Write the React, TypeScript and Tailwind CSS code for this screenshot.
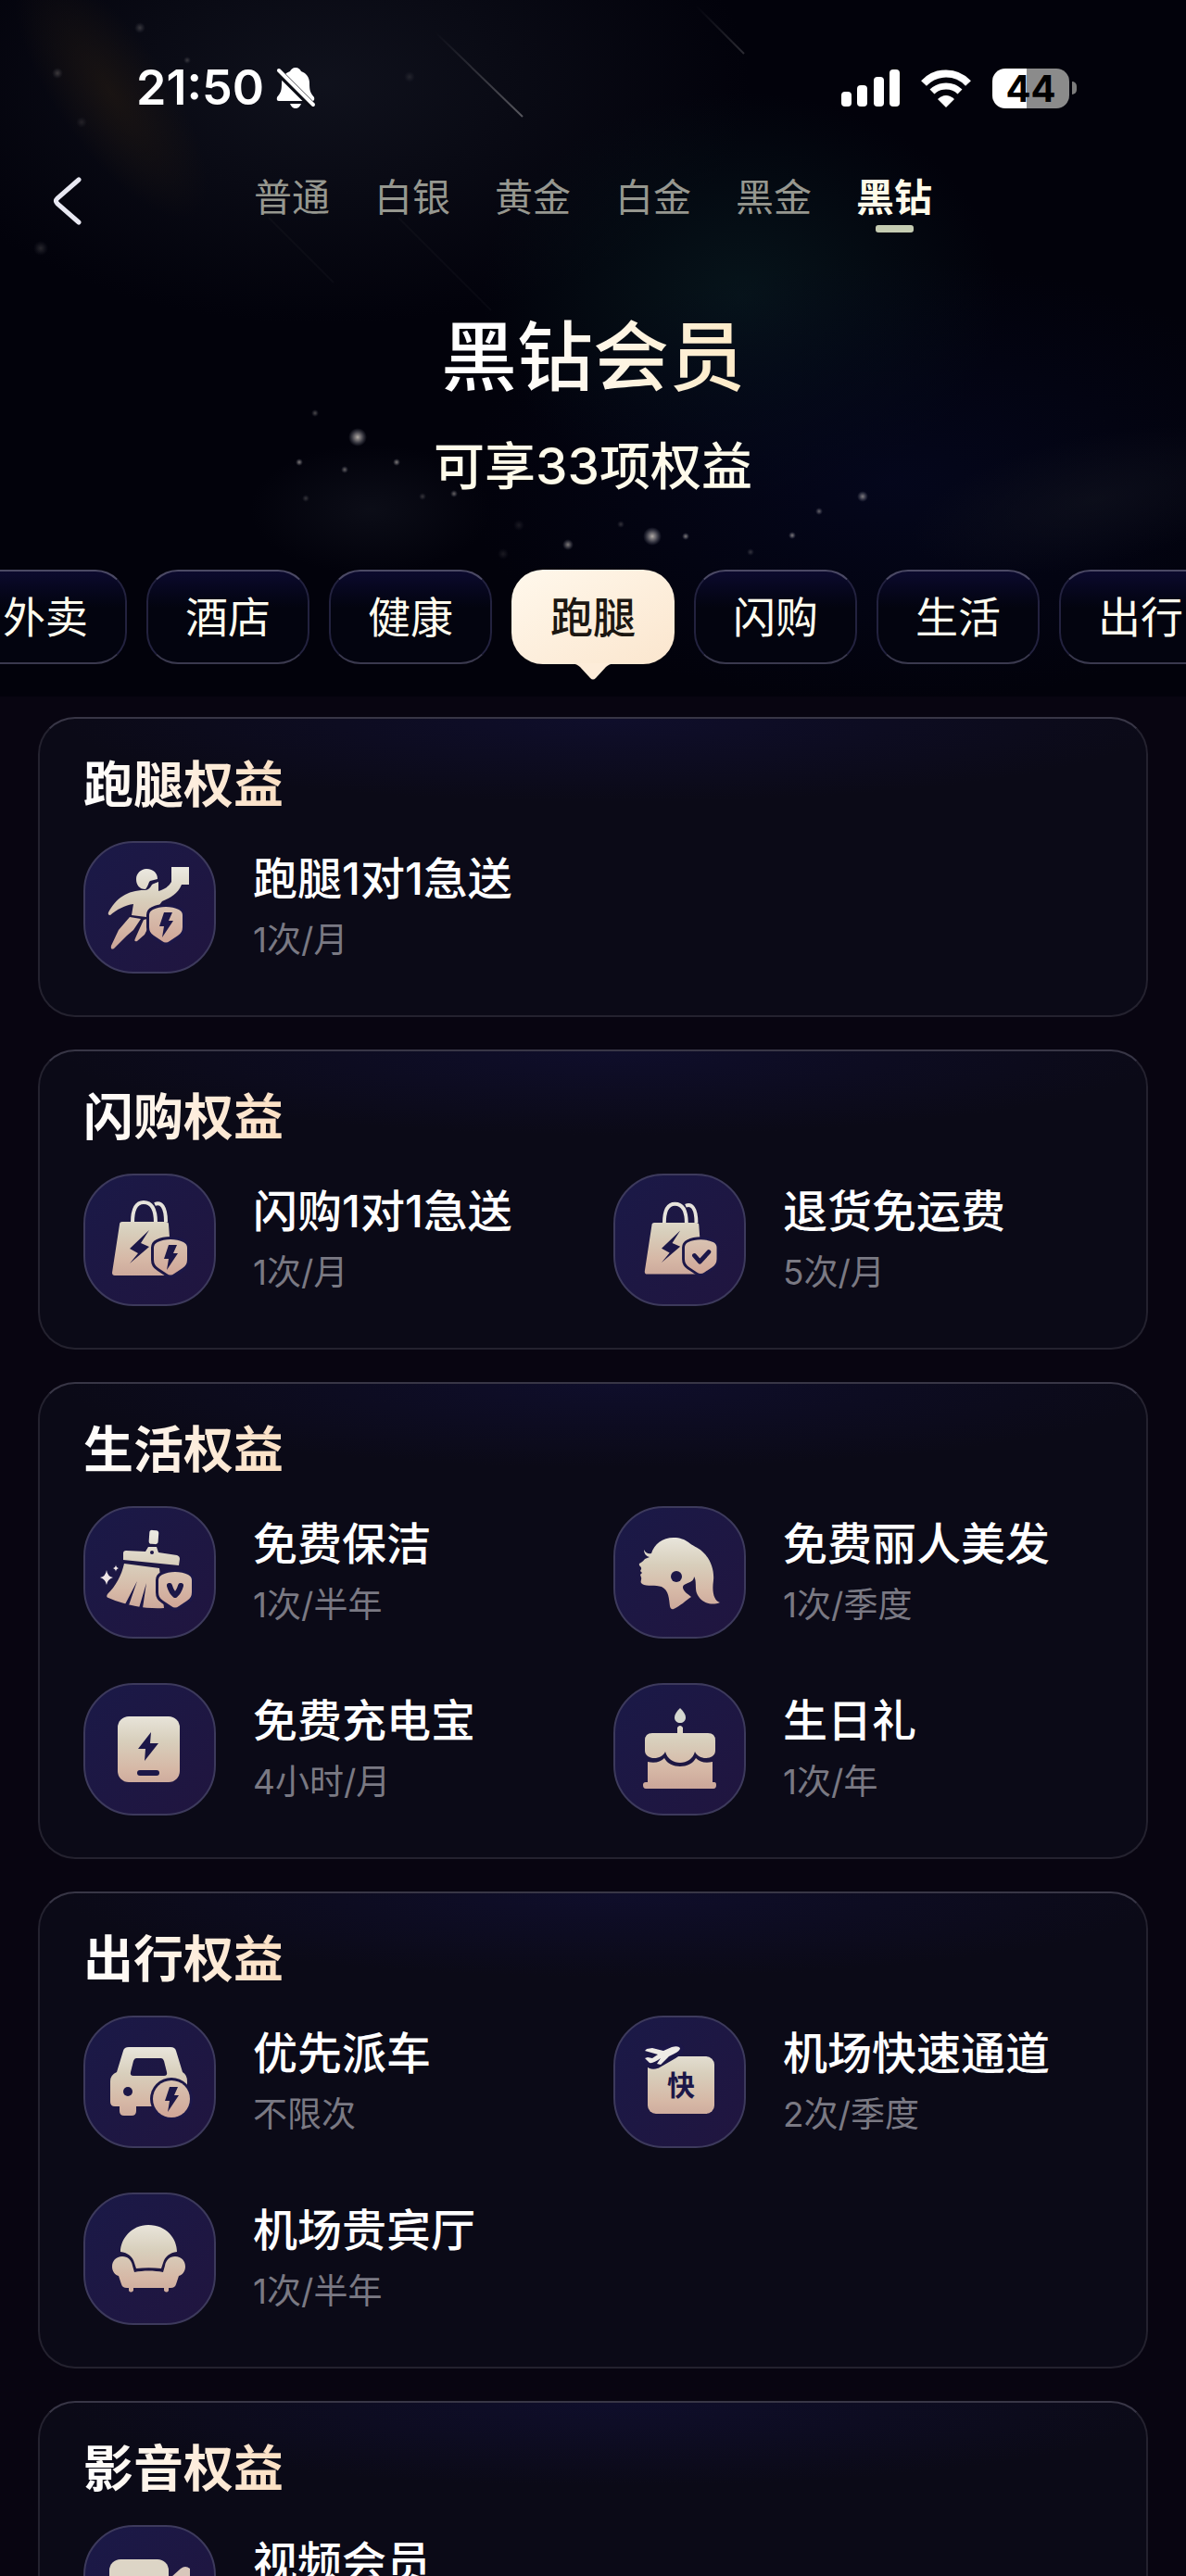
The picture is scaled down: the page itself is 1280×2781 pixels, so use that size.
import type { JSX, ReactNode } from "react";

const levels = ["普通", "白银", "黄金", "白金", "黑金", "黑钻"];
const categories = ["外卖", "酒店", "健康", "跑腿", "闪购", "生活", "出行"];

const INK = "#1c1748";
const CREAM = "url(#cream)";

// x, y, radius, opacity
const stars = [
  [386, 472, 5, 0.7], [704, 579, 5, 0.7], [323, 499, 2, 0.5], [428, 499, 2, 0.5],
  [340, 446, 2, 0.3], [372, 507, 2, 0.4], [490, 533, 2, 0.4], [456, 536, 2, 0.2],
  [330, 538, 2, 0.2], [931, 536, 3, 0.5], [884, 552, 2, 0.4], [740, 579, 2, 0.5],
  [855, 578, 2, 0.5], [613, 588, 3, 0.5], [810, 596, 2, 0.2], [560, 567, 3, 0.1],
  [670, 566, 2, 0.2], [543, 598, 3, 0.1], [151, 30, 3, 0.2], [62, 79, 3, 0.2],
  [202, 65, 2, 0.2], [44, 268, 4, 0.15], [442, 83, 3, 0.1], [88, 132, 3, 0.1],
];

function NightSky(): JSX.Element {
  return (
    <svg className="absolute inset-0 h-full w-full" viewBox="0 0 1280 752" preserveAspectRatio="xMidYMin slice" aria-hidden="true">
      <defs>
        <radialGradient id="teal">
          <stop offset="0" stopColor="#07161c" stopOpacity="0.9" />
          <stop offset="1" stopColor="#07161c" stopOpacity="0" />
        </radialGradient>
        <radialGradient id="steel">
          <stop offset="0" stopColor="#11131e" stopOpacity="0.9" />
          <stop offset="1" stopColor="#11131e" stopOpacity="0" />
        </radialGradient>
        <radialGradient id="amber">
          <stop offset="0" stopColor="#1d1612" stopOpacity="0.8" />
          <stop offset="1" stopColor="#1d1612" stopOpacity="0" />
        </radialGradient>
        <radialGradient id="navy">
          <stop offset="0" stopColor="#050820" stopOpacity="0.8" />
          <stop offset="1" stopColor="#050820" stopOpacity="0" />
        </radialGradient>
        <radialGradient id="star">
          <stop offset="0" stopColor="#fff6e8" />
          <stop offset="0.4" stopColor="#c9c4c4" stopOpacity="0.7" />
          <stop offset="1" stopColor="#8a8fa5" stopOpacity="0" />
        </radialGradient>
        <linearGradient id="meteor" x1="0" y1="0" x2="1" y2="1">
          <stop offset="0" stopColor="#8b8a8f" stopOpacity="0" />
          <stop offset="1" stopColor="#8b8a8f" stopOpacity="0.6" />
        </linearGradient>
      </defs>
      <ellipse cx="350" cy="90" rx="460" ry="260" fill="url(#steel)" />
      <ellipse cx="120" cy="100" rx="60" ry="160" fill="url(#amber)" transform="rotate(-35 120 100)" />
      <ellipse cx="800" cy="320" rx="280" ry="220" fill="url(#teal)" />
      <ellipse cx="960" cy="520" rx="460" ry="240" fill="url(#navy)" />
      <ellipse cx="1180" cy="540" rx="200" ry="70" fill="url(#steel)" opacity="0.7" transform="rotate(-12 1180 540)" />
      <ellipse cx="400" cy="550" rx="130" ry="70" fill="url(#steel)" opacity="0.7" />
      <path d="M470 35 L564 126" stroke="url(#meteor)" strokeWidth="2" />
      <path d="M750 5 L803 58" stroke="url(#meteor)" strokeWidth="2" opacity="0.5" />
      <path d="M290 235 L360 305 M430 235 L530 335" stroke="#5b5a60" strokeWidth="2" opacity="0.07" />
      {stars.map(([x, y, r, o]) => (
        <circle key={`${x}-${y}`} cx={x} cy={y} r={r * 2} opacity={o} fill="url(#star)" />
      ))}
    </svg>
  );
}

function Shield({ x, y, children }: { x: number; y: number; children: ReactNode }): JSX.Element {
  const d = "M0 -19 C5 -19 10 -18 14 -16 Q18 -14 18 -10 V3 Q18 9 13 12 L4 18 Q0 21 -4 18 L-13 12 Q-18 9 -18 3 V-10 Q-18 -14 -14 -16 C-10 -18 -5 -19 0 -19 Z";
  return (
    <g transform={`translate(${x} ${y})`}>
      <path d={d} fill={INK} stroke={INK} strokeWidth="6" />
      <path d={d} fill="url(#rose)" />
      {children}
    </g>
  );
}

const smallBolt = <path d="M-2 -13 H7 L3 -4 H8 L-4 14 L-2 2 H-7 Z" fill={INK} />;

function Bag({ badge }: { badge: ReactNode }): JSX.Element {
  return (
    <>
      <path d="M77 33 C84 30 89 36 89 52 M53 53 C53 38 57 31 65 31 C73 31 78 38 78 53" fill="none" stroke="#e6e3db" strokeWidth="4" />
      <path d="M42 52 H89 Q92 52 92 55 L96 110 H34 Q31 110 31 107 L39 55 Q39 52 42 52 Z" fill={CREAM} />
      <path d="M71 61 L50 81 L59 86 L50 97 L71 79 L62 75 Z" fill={INK} />
      <Shield x={94} y={90}>{badge}</Shield>
    </>
  );
}

const icons: Record<string, ReactNode> = {
  runner: (
    <>
      <path d="M95 28 H114 V47 H106 C102 57 94 61 85 65 L79 73 H74 Q69 76 68 82 L52 80 L54 68 C45 69 36 74 29 80 Q26 80 27 77 C35 62 47 53 66 53 C73 53 72 47 76 46 L81 44 V54 C88 52 92 49 95 44 Z" fill={CREAM} />
      <path d="M68 30 C76 30 80 35 80 41 L72 43 C70 45 70 49 67 52 C60 52 57 47 57 41 C57 35 62 30 68 30 Z" fill={CREAM} />
      <path d="M50 82 L62 84 L54 96 L47 102 L33 116 Q29 118 30 113 L38 96 Z" fill={CREAM} />
      <path d="M65 85 L69 84 V95 L66 101 L58 108 Q54 109 56 105 L60 96 Z" fill={CREAM} />
      <Shield x={89} y={90}>{smallBolt}</Shield>
    </>
  ),
  bagBolt: <Bag badge={smallBolt} />,
  bagCheck: (
    <g transform="translate(4 3) scale(0.96)">
      <Bag badge={<path d="M-7 -1 L-1 6 L9 -5" fill="none" stroke={INK} strokeWidth="5" strokeLinecap="round" strokeLinejoin="round" />} />
    </g>
  ),
  broom: (
    <>
      <rect x="71" y="26" width="10" height="15" rx="3" fill={CREAM} transform="rotate(4 76 33)" />
      <path d="M70 44 H79 L81 50 L101 53 Q104 54 104 57 L103 64 L43 58 V51 Q43 48 46 48 L67 49 Z" fill={CREAM} />
      <circle cx="74" cy="50" r="2" fill={INK} />
      <path d="M44 62 L82 67 L87 110 C72 111 50 109 27 99 Q24 98 26 95 C35 86 41 75 44 62 Z" fill={CREAM} />
      <path d="M58 81 L45 106 L49 107 Z M68 83 L60 110 L64 110 Z" fill={INK} />
      <Shield x={99} y={90}>
        <path d="M-6 -4 Q-4 3 0 6 Q4 3 6 -4" fill="none" stroke={INK} strokeWidth="6" strokeLinecap="round" strokeLinejoin="round" />
      </Shield>
      <path d="M25 69 Q26 76 32 77 Q26 79 25 85 Q24 79 18 77 Q24 76 25 69 Z M35 63 Q35 66 38 67 Q35 68 35 71 Q35 68 32 67 Q35 66 35 63 Z" fill="#efe6e6" />
    </>
  ),
  hair: (
    <>
      <path d="M65 34 C72 34 77 36 81 39 C85 43 91 44 96 49 C105 57 109 69 108 80 C106 94 109 102 115 104 C105 108 94 104 90 94 C88 89 90 80 87 76 C87 84 75 82 75 88 C76 93 80 94 84 98 C78 102 72 108 65 111 Q62 112 61 108 C60 100 60 91 52 87 C46 85 36 87 31 84 C28 82 31 79 30 77 L29 74 L31 72 L29 70 L30 68 C31 65 27 65 28 62 C32 60 33 58 34 57 L39 55 C35 54 33 51 33 47 C35 51 38 52 41 51 C44 41 53 34 65 34 Z" fill={CREAM} />
      <circle cx="68" cy="76" r="6" fill={INK} />
    </>
  ),
  powerBank: (
    <>
      <rect x="37" y="36" width="67" height="71" rx="12" fill={CREAM} />
      <path d="M73 53 L59 71 H67 L66 84 L81 65 H72 Z" fill={INK} />
      <rect x="58" y="94" width="24" height="6" rx="3" fill={INK} />
    </>
  ),
  cake: (
    <>
      <path d="M72 27 C76 31 78 34 78 37 C78 41 75 43 72 43 C69 43 66 41 66 37 C66 34 68 31 72 27 Z" fill="#d5d8d0" />
      <path d="M69 54 V48 Q72 44 75 48 V54 H102 Q110 54 110 62 V73 C110 83 92 84 88 74 C84 90 60 90 56 74 C52 84 34 83 34 73 V62 Q34 54 42 54 Z" fill={CREAM} />
      <path d="M37 85 C45 87 51 85 55 81 C61 93 83 93 89 81 C93 85 99 87 107 85 V107 H109 Q111 107 111 110 Q111 114 108 114 H35 Q32 114 32 110 Q32 107 35 107 H37 Z" fill={CREAM} />
    </>
  ),
  car: (
    <>
      <path fillRule="evenodd" d="M49 34 H94 Q99 34 100 38 L107 61 Q112 64 112 71 V98 H57 V103 Q57 108 52 108 H44 Q39 108 39 103 V98 H34 Q29 98 29 93 V71 Q29 64 36 61 L43 38 Q44 34 49 34 Z M57 46 Q55 46 54 49 L51 61 Q50 65 54 65 H87 Q91 65 90 61 L87 49 Q86 46 84 46 Z" fill={CREAM} />
      <circle cx="48" cy="82" r="5" fill={INK} />
      <circle cx="95" cy="90" r="23" fill={INK} />
      <circle cx="95" cy="90" r="20" fill="url(#rose)" />
      <g transform="translate(95 90)">{smallBolt}</g>
    </>
  ),
  fastPass: (
    <>
      <rect x="37" y="44" width="72" height="62" rx="9" fill={CREAM} />
      <path d="M36 36 L42 36 L51 38 L61 34 Q70 31 72 36 Q72 39 66 42 L47 53 Q41 55 38 51 L34 46 L37 45 L42 47 L49 44 Z" fill={INK} stroke={INK} strokeWidth="8" strokeLinejoin="round" />
      <path d="M36 36 L42 35 L54 38 L63 34 Q70 32 72 35 Q72 38 66 41 L60 44 L51 53 L47 52 L51 46 Q43 52 39 51 L34 46 L37 45 L42 46 L48 42 L34 38 Z" fill="#eeebe6" />
      <text x="73" y="86" textAnchor="middle" fontSize="30" fontWeight="700" fill={INK}>快</text>
    </>
  ),
  sofa: (
    <>
      <path d="M70 35 C90 35 101 50 101 64 C93 65 88 69 86 76 L84 82 C75 81 66 81 57 82 L55 76 C53 69 48 65 40 64 C40 50 52 35 70 35 Z" fill={CREAM} />
      <path d="M42 69 C48 69 52 73 53 79 L55 86 C65 84 76 84 86 86 L88 79 C89 73 93 69 99 69 C106 69 110 74 110 80 C110 85 107 89 103 90 L100 99 Q99 103 94 103 H92 V106 Q90 109 87 106 V103 H54 V106 Q51 109 49 106 V103 H47 Q42 103 41 99 L38 90 C34 89 31 85 31 80 C31 74 35 69 42 69 Z" fill={CREAM} />
    </>
  ),
  video: (
    <>
      <rect x="28" y="37" width="64" height="66" rx="12" fill="#ddd5c6" />
      <path d="M95 56 L105 47 Q110 43 115 47 V92 L95 80 Z" fill="#d8c7bb" />
    </>
  ),
};

interface Benefit {
  icon: string;
  name: string;
  quota: string;
}

const sections: { title: string; items: Benefit[] }[] = [
  { title: "跑腿权益", items: [{ icon: "runner", name: "跑腿1对1急送", quota: "1次/月" }] },
  {
    title: "闪购权益",
    items: [
      { icon: "bagBolt", name: "闪购1对1急送", quota: "1次/月" },
      { icon: "bagCheck", name: "退货免运费", quota: "5次/月" },
    ],
  },
  {
    title: "生活权益",
    items: [
      { icon: "broom", name: "免费保洁", quota: "1次/半年" },
      { icon: "hair", name: "免费丽人美发", quota: "1次/季度" },
      { icon: "powerBank", name: "免费充电宝", quota: "4小时/月" },
      { icon: "cake", name: "生日礼", quota: "1次/年" },
    ],
  },
  {
    title: "出行权益",
    items: [
      { icon: "car", name: "优先派车", quota: "不限次" },
      { icon: "fastPass", name: "机场快速通道", quota: "2次/季度" },
      { icon: "sofa", name: "机场贵宾厅", quota: "1次/半年" },
    ],
  },
  { title: "影音权益", items: [{ icon: "video", name: "视频会员", quota: "1次/月" }] },
];

function StatusBar(): JSX.Element {
  return (
    <div className="flex h-[130px] items-center justify-between pt-[60px] pr-[118px] pl-[147px]">
      <div className="flex items-center gap-3">
        <span className="text-[52px] leading-[70px] font-semibold">21:50</span>
        <svg width="44" height="46" viewBox="0 0 44 46" aria-hidden="true">
          <path d="M22 1 C25 1 27 3 28 5 C34 7 37 12 37 18 C37 26 38 28 42 33 Q43 37 40 37 H4 Q1 37 2 33 C6 28 7 26 7 18 C7 12 10 7 16 5 C17 3 19 1 22 1 Z M16 40 H28 Q26 45 22 45 Q18 45 16 40 Z" fill="#fff" />
          <path d="M3 5 L41 43" stroke="#0b0c14" strokeWidth="8" />
          <path d="M4 4 L41 41" stroke="#fff" strokeWidth="4" strokeLinecap="round" />
        </svg>
      </div>
      <div className="flex items-center gap-[22px]">
        <svg width="63" height="40" viewBox="0 0 63 40" fill="#fff" aria-hidden="true">
          <rect x="0" y="24" width="11" height="16" rx="4" />
          <rect x="17" y="17" width="11" height="23" rx="4" />
          <rect x="35" y="8" width="11" height="32" rx="4" />
          <rect x="52" y="0" width="11" height="40" rx="4" />
        </svg>
        <svg width="56" height="41" viewBox="0 0 56 41" aria-hidden="true">
          <path d="M4 15 C17 1 39 1 52 15" fill="none" stroke="#fff" strokeWidth="8" />
          <path d="M13 24 C21 16 35 16 43 24" fill="none" stroke="#fff" strokeWidth="7" />
          <path d="M28 41 L19 32 Q28 24 37 32 Z" fill="#fff" />
        </svg>
        <div className="flex items-center gap-[3px]">
          <div className="h-[43px] w-[83px] rounded-[14px] bg-[linear-gradient(90deg,#fff_44%,#8b8b8b_44%)] text-center text-[40px] leading-[43px] font-bold text-black">
            44
          </div>
          <div className="h-[14px] w-[5px] rounded-r-full bg-[#7c7c7c]" />
        </div>
      </div>
    </div>
  );
}

function BenefitItem({ icon, name, quota }: Benefit): JSX.Element {
  return (
    <li className="flex items-center gap-10">
      <div className="h-[143px] w-[143px] shrink-0 overflow-hidden rounded-[54px] border-2 border-[#3d3a5c] bg-linear-to-br from-[#1a1947] to-[#20153f]">
        <svg className="-m-[2px]" width="143" height="143" viewBox="0 0 143 143" aria-hidden="true">
          {icons[icon]}
        </svg>
      </div>
      <div className="whitespace-nowrap">
        <h3 className="text-[48px] leading-[56px] font-medium text-white">{name}</h3>
        <p className="mt-3.5 text-[37px] leading-[48px] text-[#7a7983]">{quota}</p>
      </div>
    </li>
  );
}

export default function App(): JSX.Element {
  return (
    <div className="h-screen overflow-hidden bg-[#080511] font-[Inter,'Noto_Sans_CJK_SC',sans-serif] text-white">
      {/* Shared icon gradients */}
      <svg className="absolute" width="0" height="0" aria-hidden="true">
        <defs>
          <linearGradient id="cream" gradientUnits="userSpaceOnUse" x1="0" y1="28" x2="0" y2="114">
            <stop offset="0" stopColor="#eceae2" />
            <stop offset="0.4" stopColor="#d8cfbc" />
            <stop offset="0.75" stopColor="#d6b8a6" />
            <stop offset="1" stopColor="#cba699" />
          </linearGradient>
          <linearGradient id="rose" x1="0" y1="0" x2="0" y2="1">
            <stop offset="0" stopColor="#d9c3b2" />
            <stop offset="1" stopColor="#d0a697" />
          </linearGradient>
        </defs>
      </svg>

      <header className="relative overflow-hidden bg-[#02020b] pb-[35px]">
        <NightSky />
        <div className="relative">
          <StatusBar />

          <nav className="grid grid-cols-[1fr_auto_1fr] items-start pt-[55px]">
            <button type="button" aria-label="返回" className="ml-[56px] w-[33px] pt-1.5">
              <svg width="33" height="52" viewBox="0 0 33 52" fill="none">
                <path d="M29 3 L6 23 Q3 26 6 29 L29 49" stroke="#e8e8f2" strokeWidth="5" strokeLinecap="round" />
              </svg>
            </button>
            <ul className="flex gap-12">
              {levels.map((level) => (
                <li key={level}>
                  {level === "黑钻" ? (
                    <a href="#" aria-current="page" className="flex flex-col items-center text-[41px] leading-[56px] font-bold text-[#fffbe9]">
                      {level}
                      <span className="mt-[2px] h-2 w-[41px] rounded-[3px] bg-[#c5ccb2]" />
                    </a>
                  ) : (
                    <a href="#" className="text-[41px] leading-[56px] text-[#96978f]">
                      {level}
                    </a>
                  )}
                </li>
              ))}
            </ul>
          </nav>

          <div className="mt-[85px] flex flex-col items-center">
            <h1 className="bg-linear-to-r from-white from-20% to-[#fdeac6] bg-clip-text text-[82px] leading-[100px] font-medium text-transparent">
              黑钻会员
            </h1>
            <p className="mt-[31px] text-[55px] leading-[72px] font-medium text-[#fffbea]">可享33项权益</p>
          </div>

          <div className="mt-[76px] flex justify-center gap-[21px]">
            {categories.map((category) =>
              category === "跑腿" ? (
                <button
                  key={category}
                  type="button"
                  className="relative h-[102px] w-[176px] shrink-0 rounded-[34px] bg-linear-to-br from-[#fff8ec] to-[#fbe6ce] text-[46px] font-medium text-[#1c1712]"
                >
                  {category}
                  <svg className="absolute top-full left-1/2 -mt-px -translate-x-1/2" width="46" height="18" viewBox="0 0 46 18" aria-hidden="true">
                    <path d="M0 0 H46 Q40 1 37 4 L26 16 Q23 19 20 16 L9 4 Q6 1 0 0 Z" fill="#fdecd9" />
                  </svg>
                </button>
              ) : (
                <button
                  key={category}
                  type="button"
                  className="h-[102px] w-[176px] shrink-0 rounded-[34px] border-2 border-[#23223f] border-t-[#4b4964] border-b-[#3a394e] bg-linear-to-b from-[#0c0a2e] to-[#03040f] to-40% text-[46px] text-[#fffcee]"
                >
                  {category}
                </button>
              )
            )}
          </div>
        </div>
      </header>

      <main className="flex flex-col gap-[35px] px-[41px] pt-[22px] pb-[35px]">
        {sections.map((section) => (
          <section
            key={section.title}
            className="rounded-[40px] border-2 border-[#24222f] border-t-[#383646] bg-[#0b0a17] bg-[radial-gradient(ellipse_50%_90px_at_52%_0,#0f0e2b,#0b0a17)] px-[47px] pt-9 pb-[45px]"
          >
            <h2 className="w-fit bg-linear-to-r from-white to-[#fbdfc2] bg-clip-text text-[54px] leading-[72px] font-bold text-transparent">
              {section.title}
            </h2>
            <ul className="mt-6 grid grid-cols-2 gap-x-11 gap-y-12">
              {section.items.map((item) => (
                <BenefitItem key={item.name} {...item} />
              ))}
            </ul>
          </section>
        ))}
      </main>
    </div>
  );
}
